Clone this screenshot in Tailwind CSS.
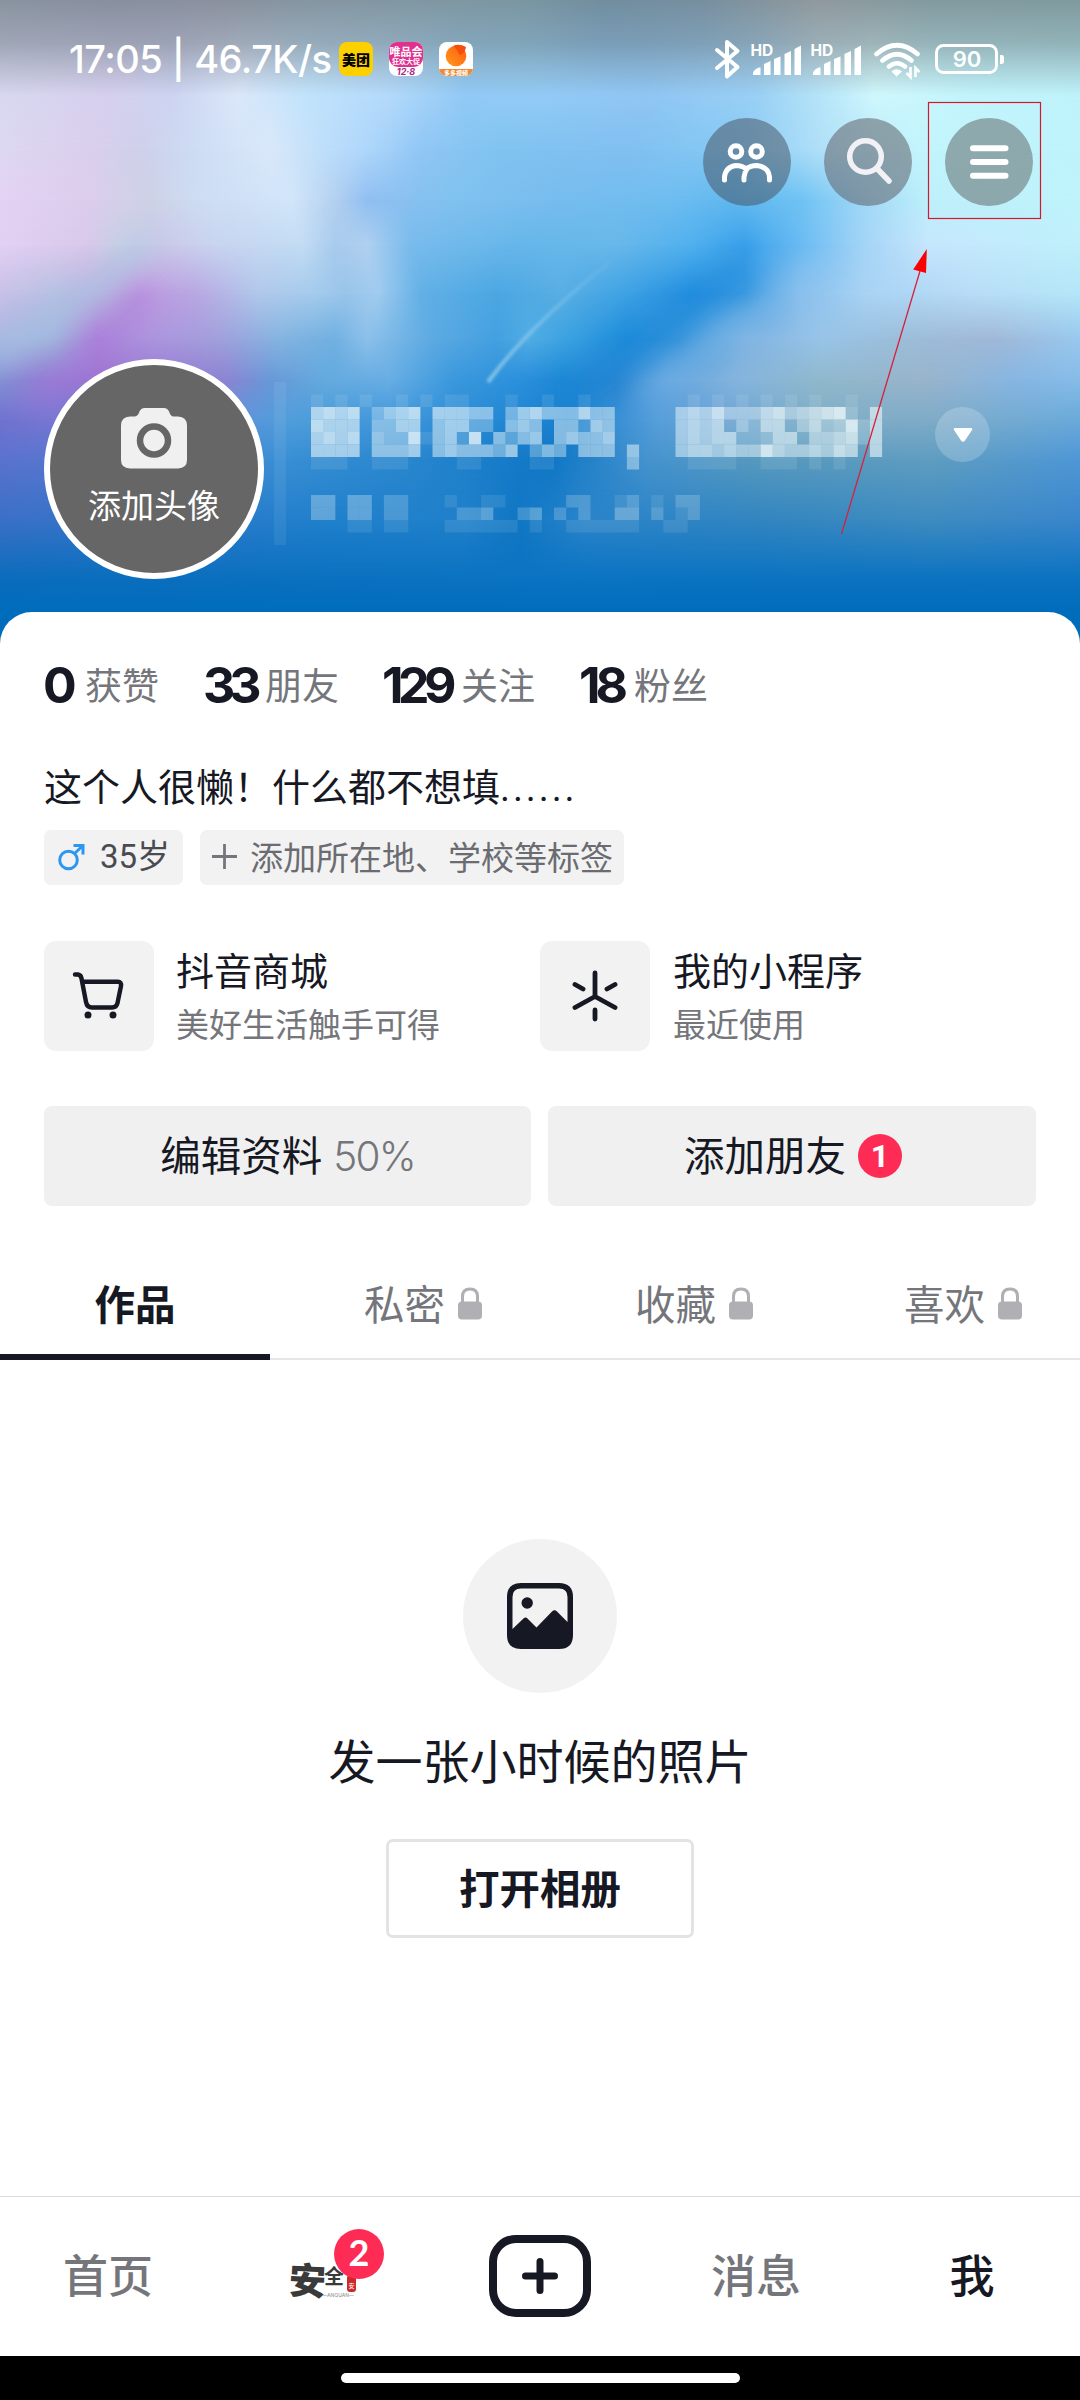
<!DOCTYPE html>
<html lang="zh-CN">
<head>
<meta charset="utf-8">
<title>我</title>
<script src="https://cdn.jsdelivr.net/npm/@tailwindcss/browser@4"></script>
</head>
<body class="w-[1080px] h-[2400px] overflow-hidden bg-white text-[#161823] font-['Noto_Sans_CJK_SC',sans-serif] flex flex-col">

<header class="relative h-[612px] shrink-0">
  <div id="sky" class="absolute inset-x-0 top-0 h-[660px] overflow-hidden bg-[#006dbc]"></div>
  <svg class="absolute left-0 top-0" width="1080" height="660" viewBox="0 0 1080 660" fill="none">
    <defs>
      <filter id="b1" x="-50%" y="-50%" width="200%" height="200%"><feGaussianBlur stdDeviation="12"/></filter>
      <filter id="b2" x="-50%" y="-50%" width="200%" height="200%"><feGaussianBlur stdDeviation="1.5"/></filter>
      <linearGradient id="shade" x1="0" y1="0" x2="0" y2="1"><stop offset="0" stop-color="#3c4a50" stop-opacity=".5"/><stop offset=".45" stop-color="#3c4a50" stop-opacity=".36"/><stop offset="1" stop-color="#3c4a50" stop-opacity="0"/></linearGradient>
      <linearGradient id="ray" gradientUnits="userSpaceOnUse" x1="488" y1="382" x2="620" y2="250"><stop offset="0" stop-color="#a8d8ee" stop-opacity=".7"/><stop offset="1" stop-color="#a8d8ee" stop-opacity="0"/></linearGradient>
    </defs>
    <path d="M565 400Q650 330 745 262" stroke="#1585d6" stroke-width="26" opacity=".4" filter="url(#b1)"/>
    <path d="M640 400Q730 320 830 270" stroke="#8fc4ee" stroke-width="20" opacity=".35" filter="url(#b1)"/>
    <path d="M30 405Q100 350 145 290" stroke="#a873da" stroke-width="26" opacity=".35" filter="url(#b1)"/>
    <path d="M-10 360Q80 310 150 240" stroke="#a6c8e4" stroke-width="22" opacity=".5" filter="url(#b1)"/>
    <path d="M488 382Q530 325 610 262" stroke="url(#ray)" stroke-width="4" filter="url(#b2)"/>
    <rect width="1080" height="96" fill="url(#shade)"/>
    <g id="mosaic" fill="#eef8fa"><rect x="274" y="382" width="12" height="163" opacity=".07"/></g>
  </svg>

  <div class="relative flex flex-col">
    <div class="flex h-[118px] pl-[69px] pt-[38px] text-white">
      <div class="h-[42px] w-[270px] text-[38px] leading-[42px] font-medium font-['Inter',sans-serif] tracking-[-0.500px] whitespace-nowrap">17:05 | 46.7K/s</div>
      <div class="flex gap-4 pt-[4px]">
        <div class="flex h-[34px] w-[34px] items-center justify-center rounded-[8px] bg-[#fdd000] text-[14px] font-black text-black leading-none">美团</div>
        <div class="flex h-[34px] w-[34px] flex-col items-center overflow-hidden rounded-[8px] bg-white">
          <div class="flex h-[25px] w-full shrink-0 flex-col items-center rounded-b-[9px] bg-[#e2308f] pt-[4px] text-[11px] font-bold leading-[11px] text-white"><span class="whitespace-nowrap">唯品会</span><span class="whitespace-nowrap text-[7px] leading-[8px]">狂欢大促</span></div>
          <span class="text-[9px] font-bold italic leading-[9px] text-[#b01a8a] font-['Inter',sans-serif]">12·8</span>
        </div>
        <div class="flex h-[34px] w-[34px] flex-col items-center justify-between overflow-hidden rounded-[8px] bg-white">
          <svg width="26" height="26" viewBox="0 0 26 26"><defs><linearGradient id="peach" x1="0" y1="1" x2="1" y2="0"><stop offset="0" stop-color="#ff9a1a"/><stop offset="1" stop-color="#ff5a10"/></linearGradient></defs><circle cx="13" cy="14" r="10.3" fill="url(#peach)"/><path d="M10 4q6-3 13 1q-1 7-7 8q-1-5-6-9z" fill="#f4500c"/></svg>
          <div class="flex h-[7px] w-full items-center justify-center whitespace-nowrap bg-[#ee8a35] text-[6px] font-bold leading-none text-white">多多视频</div>
        </div>
      </div>
      <svg class="ml-[241px] shrink-0" width="300" height="42" viewBox="714 38 300 42" fill="none" stroke="#fff">
        <path d="M717 50L737.500 67L727 76.500V42L737.500 51L717 68" stroke-width="4" stroke-linejoin="round" stroke-linecap="round"/>
        <g fill="#fff" stroke="none">
          <text x="750.500" y="55.500" font-family="Inter" font-weight="700" font-size="15.500">HD</text>
          <path id="bars" d="M753 75v-2q1-4 6-5.500h1.500v7.500zM764 75v-11l6.500-3v14zM774 75v-16l6.500-2.500v18.500zM784.500 75v-21l6.500-3v24zM794.500 75v-26l6.500-3.500v29.500z"/>
          <text x="810.500" y="55.500" font-family="Inter" font-weight="700" font-size="15.500">HD</text>
          <use href="#bars" x="60"/>
          <path d="M896.500 76.500l-5-5q5-4.500 10.500 0zM1000 55h1.500q2.500 0 2.500 2v5q0 2-2.500 2H1000z"/>
        </g>
        <path d="M876.500 54Q897 36.500 917.500 54M882.500 60.500Q897 48 911.500 60.500M889 66.500Q897 60 905 66.500" stroke-width="4.600" stroke-linecap="round"/>
        <path d="M910.500 67v10l-4-4M915.500 77v-9l4 4" stroke-width="2.600"/>
        <rect x="936.500" y="45.500" width="60" height="27" rx="7" stroke-width="3"/>
        <text x="967" y="67" text-anchor="middle" font-family="Inter" font-weight="600" font-size="22" fill="#fff" stroke="none">90</text>
      </svg>
    </div>

    <div class="flex h-[88px] justify-end gap-[33px] pr-[47px]">
      <button class="h-[88px] w-[88px] rounded-full bg-[#444c5a]/50"><svg width="88" height="88" viewBox="0 0 88 88" fill="none" stroke="#fff" stroke-width="5" stroke-linecap="round"><circle cx="33" cy="33.500" r="5.800"/><circle cx="53.500" cy="33.500" r="5.800"/><path d="M21.500 62V59Q22.500 49 33 47.500Q39 47.500 43 51Q47.500 47.500 54 47.500Q65.500 49 66.500 59V62M41 62V59Q41.500 54 44.500 50"/></svg></button>
      <button class="h-[88px] w-[88px] rounded-full bg-[#5f6068]/55"><svg width="88" height="88" viewBox="0 0 88 88" fill="none" stroke="#f2f2f6" stroke-width="5.500" stroke-linecap="round"><circle cx="41.500" cy="38.500" r="15.800"/><path d="M53 50.500L65 63"/></svg></button>
      <button class="h-[88px] w-[88px] rounded-full bg-[#626b6b]/55"><svg width="88" height="88" viewBox="0 0 88 88" fill="none" stroke="#fff" stroke-width="6" stroke-linecap="round"><path d="M28 30.300H60.500M28 44H60.500M28 57.700H60.500"/></svg></button>
    </div>

    <div class="mt-[153px] flex h-[220px] pl-[44px]">
      <div class="flex h-[220px] w-[220px] flex-col items-center rounded-full border-[6px] border-white bg-[#666] pt-[42px]">
        <svg width="66" height="62" viewBox="0 0 66 62"><path d="M9 9.500H14Q17 9 18.500 4.500Q20 1 23.500 1H43Q46.500 1 48 4.500Q49.500 9 52 9.500H57Q66 10 66 18.500V53Q66 61 57 61.500H9Q0 61 0 53V18.500Q0 10 9 9.500z" fill="#f0f0f0"/><circle cx="33" cy="33.500" r="14" fill="#f0f0f0" stroke="#666" stroke-width="6.500"/></svg>
        <span class="mt-[12px] whitespace-nowrap text-[33px] leading-[46px] text-white">添加头像</span>
      </div>
      <div class="ml-[671px] mt-[48px] flex h-[55px] w-[55px] items-center justify-center rounded-full bg-white/20"><svg width="20" height="16" viewBox="0 0 20 16"><path d="M2 1H18Q20 1 19 3L12 13.500Q10 16 8 13.500L1 3Q0 1 2 1z" fill="#fff"/></svg></div>
    </div>
  </div>

  <svg class="absolute left-[820px] top-[95px]" width="240" height="450" viewBox="820 95 240 450" fill="none">
    <rect x="928.500" y="102.500" width="112" height="116" stroke="#d2182c" stroke-width="1.200"/>
    <path d="M841.500 534L920 271" stroke="#d8203c" stroke-width="1.300"/>
    <path d="M926.800 249L913.200 269.500L926 273z" fill="#fa0000"/>
  </svg>
</header>

<main class="relative h-[1584px] shrink-0 rounded-t-[32px] bg-white">
  <div class="flex h-[120px] items-center px-[45px] pt-[26px] text-[37px] text-[#75767b]">
    <div class="flex w-[159px] items-center"><b class="-ml-[2px] w-[42px] font-['Inter',sans-serif] text-[50px] text-[#161823] leading-none">0</b><span>获赞</span></div>
    <div class="flex w-[180px] items-center"><b class="-ml-[1px] w-[62px] font-['Inter',sans-serif] text-[50px] tracking-[-6px] text-[#161823] leading-none">33</b><span>朋友</span></div>
    <div class="flex w-[195px] items-center"><b class="-ml-[2px] w-[79px] font-['Inter',sans-serif] text-[50px] tracking-[-5.500px] text-[#161823] leading-none">129</b><span>关注</span></div>
    <div class="flex items-center"><b class="w-[55px] font-['Inter',sans-serif] text-[50px] tracking-[-5px] text-[#161823] leading-none">18</b><span>粉丝</span></div>
  </div>
  <div class="h-[98px] px-[44px] pt-[11px] text-[38px] leading-[84px]"><span>这个人很懒！什么都不想填</span><span class="font-['Roboto',sans-serif] tracking-[2.900px]">......</span></div>
  <div class="flex h-[55px] gap-[17px] px-[44px] text-[33px] leading-[52px]">
    <div class="flex h-[55px] w-[139px] rounded-[7px] bg-[#f2f2f2] pl-[13px] text-[#4a4b50]">
      <svg class="mr-[14px] mt-[13px]" width="29" height="29" viewBox="0 0 29 29" fill="none" stroke="#2d96f0" stroke-width="3"><circle cx="11.500" cy="17" r="8.800"/><path d="M17.500 10.500L26 2.500M16.500 2.500H26V11.500"/></svg>
      <span class="font-['Roboto','Noto_Sans_CJK_SC',sans-serif] whitespace-nowrap leading-[54px]">35岁</span>
    </div>
    <div class="flex h-[55px] w-[424px] rounded-[7px] bg-[#f2f2f2] pl-[12px] text-[#6b6c71]">
      <svg class="mr-[13px] mt-[14px]" width="25" height="25" viewBox="0 0 25 25" stroke="#75767b" stroke-width="2.800"><path d="M12.500 0V25M0 12.500H25"/></svg>
      <span class="whitespace-nowrap">添加所在地、学校等标签</span>
    </div>
  </div>

  <div class="mt-[56px] flex h-[110px] px-[44px]">
    <div class="flex w-[496px] gap-[22px]">
      <div class="h-[110px] w-[110px] rounded-[12px] bg-[#f2f2f2]"><svg width="110" height="110" viewBox="0 0 110 110" fill="none" stroke="#161823" stroke-width="4.400" stroke-linecap="round" stroke-linejoin="round"><path d="M31 33.500H34Q37 34 37.500 37.500L42 61Q43 66.500 48 66.500H68Q72.500 66.500 73.500 62L77 45Q77.500 40.800 74 40.800H38"/><circle cx="44" cy="74" r="3.500" fill="#161823" stroke="none"/><circle cx="69" cy="74" r="3.500" fill="#161823" stroke="none"/></svg></div>
      <div class="flex flex-col"><span class="text-[38px] leading-[55px]">抖音商城</span><span class="text-[33px] leading-[55px] text-[#75767b]">美好生活触手可得</span></div>
    </div>
    <div class="flex gap-[23px]">
      <div class="h-[110px] w-[110px] rounded-[12px] bg-[#f2f2f2]"><svg width="110" height="110" viewBox="0 0 110 110" fill="none" stroke="#161823" stroke-width="4.800" stroke-linecap="round"><path d="M55 32V55.500M55 55.500L35 66.500M55 55.500L75 66.500M35 43.500L43 48M75 43.500L67 48M55 69V78"/></svg></div>
      <div class="flex flex-col"><span class="text-[38px] leading-[55px]">我的小程序</span><span class="text-[33px] leading-[55px] text-[#75767b]">最近使用</span></div>
    </div>
  </div>

  <div class="mt-[55px] flex h-[100px] gap-[17px] px-[44px] text-[40.500px] leading-[95px]">
    <div class="flex w-[487px] justify-center gap-[11px] rounded-[8px] bg-[#f0f0f0]"><span>编辑资料</span><span class="font-['Inter',sans-serif] font-light leading-[101px] tracking-[-1.800px] text-[#75767b]">50%</span></div>
    <div class="flex w-[488px] justify-center gap-[12px] rounded-[8px] bg-[#f0f0f0] pl-[2px]"><span>添加朋友</span><span class="mt-[28px] flex h-[44px] w-[44px] items-center justify-center rounded-full bg-[#fe2c55] font-['Roboto',sans-serif] text-[32px] font-bold leading-none text-white">1</span></div>
  </div>

  <nav class="mt-[54px] grid h-[100px] grid-cols-4 border-b-2 border-[#e6e6e8] text-[40.500px] text-[#75767b]">
    <div class="relative flex h-[100px] items-start justify-center border-b-[6px] border-[#161823] pt-[13px] font-bold leading-[60px] text-[#161823]">作品</div>
    <div class="flex h-[86px] items-center gap-[13px] pl-[94px]"><span class="leading-[60px]">私密</span><svg width="24" height="33" viewBox="0 0 24 33"><path d="M4.500 15V9.500Q4.500 2 12 2Q19.500 2 19.500 9.500V15" fill="none" stroke="#b0b0b4" stroke-width="3"/><rect y="14.500" width="24" height="18" rx="4" fill="#b0b0b4"/></svg></div>
    <div class="flex h-[86px] items-center gap-[13px] pl-[95px]"><span class="leading-[60px]">收藏</span><svg width="24" height="33" viewBox="0 0 24 33"><path d="M4.500 15V9.500Q4.500 2 12 2Q19.500 2 19.500 9.500V15" fill="none" stroke="#b0b0b4" stroke-width="3"/><rect y="14.500" width="24" height="18" rx="4" fill="#b0b0b4"/></svg></div>
    <div class="flex h-[86px] items-center gap-[13px] pl-[94px]"><span class="leading-[60px]">喜欢</span><svg width="24" height="33" viewBox="0 0 24 33"><path d="M4.500 15V9.500Q4.500 2 12 2Q19.500 2 19.500 9.500V15" fill="none" stroke="#b0b0b4" stroke-width="3"/><rect y="14.500" width="24" height="18" rx="4" fill="#b0b0b4"/></svg></div>
  </nav>

  <section class="flex flex-col items-center pt-[179px]">
    <div class="flex h-[154px] w-[154px] items-center justify-center rounded-full bg-[#f2f2f2]"><svg width="66" height="66" viewBox="0 0 66 66"><path fill="#161823" fill-rule="evenodd" d="M14 0H52Q66 0 66 14V52Q66 66 52 66H14Q0 66 0 52V14Q0 0 14 0zM14 5.500Q5.500 5.500 5.500 14V46L16.500 35.500Q18.500 33.500 20.500 35.500L29.500 44.500L45 28.500Q47.500 26 50 28.500L60.500 39V14Q60.500 5.500 52 5.500z"/><circle cx="20.200" cy="20" r="5.700" fill="#161823"/></svg></div>
    <p class="mt-[31px] text-[47px] leading-[70px]">发一张小时候的照片</p>
    <button class="mt-[45px] h-[99px] w-[308px] rounded-[7px] border-[3px] border-[#e3e3e4] pb-[4px] text-[40.500px] font-bold leading-[88px]">打开相册</button>
  </section>
</main>

<footer class="grid h-[160px] shrink-0 grid-cols-5 border-t border-[#dcdcdd] bg-white text-[45px] font-medium leading-[154px] text-[#75767b]">
  <span class="text-center">首页</span>
  <div class="relative">
    <svg class="mt-[50px] ml-[70px]" width="80" height="60" viewBox="286 2247 80 60" fill="#3a3a3a">
      <text x="289" y="2294" font-family="Noto Sans CJK SC" font-weight="900" font-size="37" transform="rotate(3 305 2280)">安</text>
      <text x="324" y="2284" font-family="Noto Sans CJK SC" font-weight="700" font-size="20">全</text>
      <text x="322" y="2297" font-family="Inter" font-size="5" fill="#999">—ANQUAN—</text>
      <rect x="347" y="2275" width="9" height="17" rx="3" fill="#cc2a2a"/>
      <text x="348.500" y="2288" font-family="Noto Sans CJK SC" font-size="6" fill="#fff">安</text>
    </svg>
    <span class="absolute left-[118px] top-[32px] h-[50px] w-[50px] rounded-full bg-[#fe2c55] text-center font-['Lato',sans-serif] text-[36px] font-bold leading-[47px] text-white">2</span>
  </div>
  <div class="flex justify-center pt-[38px]"><svg width="102" height="82" viewBox="0 0 102 82" fill="none" stroke="#161823"><rect x="4" y="4" width="94" height="74" rx="23" stroke-width="8"/><path d="M51 26.500V55.500M36.500 41H65.500" stroke-width="7" stroke-linecap="round"/></svg></div>
  <span class="text-center">消息</span>
  <span class="text-center text-[#161823]">我</span>
</footer>
<div class="flex h-[44px] shrink-0 justify-center bg-black pt-[17px]"><div class="h-[10px] w-[399px] rounded-full bg-white"></div></div>

<script>
// Sky wallpaper: each row is a horizontal gradient that fades in below the previous one.
const rows = [
  [0, "#d6dcf0 0,#d3d6ee 10%,#d8d6ec 20%,#cfe0f2 28%,#c3e4f4 40%,#b9e2f3 48%,#a6d0ee 56%,#b0d4ee 65%,#e4e8ea 76%,#c8eaee 86%,#c2eaee 100%"],
  [94, "#d8d8f0 0,#d6d0ee 10%,#cdd4f2 16%,#dbe8fa 22%,#c2e4fc 28%,#b4dafb 36%,#92caf6 43%,#93cbf6 50%,#90c6f4 60%,#9ad0f5 70%,#c0ecfa 78%,#d0f8fd 81%,#c2f4fc 90%,#bff3fb 100%"],
  [151, "#ddd8f1 0,#dacfec 8%,#cfd0ea 13%,#cddcf4 18%,#dae8fa 25%,#bedefa 30%,#aed6fb 34%,#90c6f5 39%,#80c3f0 46%,#80bff0 58%,#84caf4 68%,#b0dff8 76%,#c2f4fc 85%,#bff3fb 100%"],
  [200, "#e4d2f4 0,#dccdec 8%,#cdd2e6 14%,#cddcf2 18%,#d2e6fa 27%,#b4d0f0 31%,#90bff1 34%,#80c2ef 42%,#76bcee 52%,#6ebdf0 62%,#60b8ef 68%,#6ec2f3 74%,#a0d8f7 80%,#bdf0fb 86%,#bff3fb 100%"],
  [245, "#e2d0f3 0,#d8c8ea 8%,#c8cfe4 11%,#cbc8e8 15%,#c8d4f0 20%,#c2dcf4 28%,#a8cbec 31%,#b0d0f0 34%,#78bbec 38%,#66b6ea 48%,#68b8ea 57%,#50b0ee 64%,#3aa0ea 69%,#68baf2 74%,#a4d4f6 80%,#c6e6fd 86%,#bff0fb 100%"],
  [294, "#c8c0e8 0,#b6c0e2 5%,#b8b0de 9%,#bd9ae0 13%,#b9a6e2 18%,#b0c8ea 24%,#a4cbec 29%,#98c4ea 32%,#a0cbef 35%,#62b0e6 39%,#4ba7e2 46%,#58aee4 52%,#42a4e4 57%,#2590e0 64%,#3a98e0 69%,#88bfec 74%,#a8d2f4 80%,#b8dcf6 90%,#b4e6f8 100%"],
  [339, "#a8b6e0 0,#a0b0dc 5%,#ac86da 9%,#ac94de 14%,#a29fdc 20%,#84b4e0 26%,#70b0e2 31%,#8cc0ea 34%,#5caae2 40%,#44a0e0 46%,#50ace4 49%,#38a0e0 53%,#1f8cda 58%,#3894da 63%,#80b4e2 69%,#98c4e8 76%,#9cbdd8 84%,#a0b8d8 92%,#98c8ee 100%"],
  [380, "#8490d4 0,#9080d4 4%,#9c74d2 9%,#8c84d2 21%,#6898d8 25%,#64aade 30%,#68aee4 36%,#3a98dc 42%,#2c90dc 48%,#1e88d6 52%,#2a86d2 57%,#62a4de 62%,#84b4de 68%,#90b8cc 76%,#98b4cc 86%,#86b6e2 94%,#86bce8 100%"],
  [420, "#7072d0 0,#7878d2 6%,#6c8ad8 17%,#4f9edb 27%,#3f96da 37%,#2488d4 46%,#1a80ce 53%,#589fdb 61%,#6ca4d4 67%,#7eaec6 76%,#7fabc8 86%,#6aaada 100%"],
  [460, "#5b72ce 0,#4c7ed0 15%,#3a8fd4 26%,#2886ce 38%,#0f77c6 51%,#4593ce 60%,#5699be 70%,#5f9dc0 86%,#4e97d6 100%"],
  [520, "#3a70c6 0,#2f78ca 15%,#2080cc 30%,#2080ca 43%,#1077c4 48%,#2a84ca 54%,#3285c0 70%,#3e8bc0 86%,#3a86cc 100%"],
  [580, "#0a6cbc 0,#0a73c2 50%,#0a72c0 100%"],
  [612, "#006dbc,#006dbc"]
];
const sky = document.getElementById("sky");
rows.forEach(([y, stops], i) => {
  const d = document.createElement("div");
  d.className = "absolute inset-0";
  d.style.background = `linear-gradient(90deg,${stops})`;
  if (i) d.style.maskImage = `linear-gradient(180deg,transparent ${rows[i - 1][0]}px,#000 ${y}px)`;
  sky.append(d);
});
// Pixelated nickname and account number; digits are cell brightness.
const cells = [
  [394.5, "10101001010110001001001000000001010101010100100"],
  [407, "67670356706665504675557550000056574446745678206"],
  [419.5, "76660446605663305650552650000056561426614634826"],
  [432, "67670544815628053560565560000056566223661556726"],
  [444.5, "66660555605655546035405550500056656558655657606"],
  [457, "11100111000011000011000000400001111001110101000"],
  [495, "33033022000100110000022001201022"],
  [507.5, "33033022000022300230202003302012"],
  [520, "00011011000111111010011111100110"]
];
const g = document.getElementById("mosaic");
for (const [y, s] of cells) [...s].forEach((c, k) => {
  if (c === "0") return;
  const r = document.createElementNS("http://www.w3.org/2000/svg", "rect");
  r.setAttribute("x", 311 + k * 12.15);
  r.setAttribute("y", y);
  r.setAttribute("width", 12.2);
  r.setAttribute("height", 12.5);
  r.setAttribute("opacity", c / 10);
  g.append(r);
});
</script>
</body>
</html>
